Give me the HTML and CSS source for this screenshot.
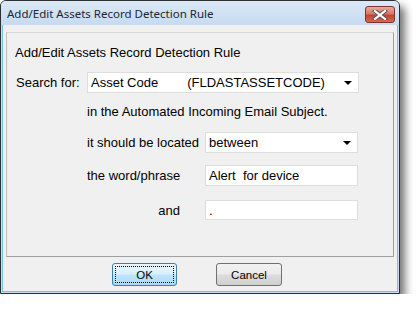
FILE: index.html
```html
<!DOCTYPE html>
<html lang="en">

<head>
    <meta charset="UTF-8">
    <title>Add/Edit Assets Record Detection Rule</title>
    <link rel="stylesheet" href="styles.css">
</head>

<body>

    <div class="window">
        <div class="title-bar">
            <span class="title">Add/Edit Assets Record Detection Rule</span>
            <div class="close-btn">
                <svg width="16" height="10" viewBox="0 0 16 10">
                    <path d="M3 1 L13 9 M13 1 L3 9" stroke="#5a5a5a" stroke-width="4.2" stroke-linecap="square"/>
                    <path d="M3 1 L13 9 M13 1 L3 9" stroke="#ffffff" stroke-width="2.2" stroke-linecap="square"/>
                </svg>
            </div>
        </div>

        <div class="client">
            <div class="group-box">
                <div class="heading">Add/Edit Assets Record Detection Rule</div>

                <div class="search-row">
                    <span class="search-label">Search for:</span>
                    <div class="combo wide">
                        <span class="combo-text">Asset Code</span>
                        <span class="combo-text field-name">(FLDASTASSETCODE)</span>
                        <span class="arrow"></span>
                    </div>
                </div>

                <div class="hint">in the Automated Incoming Email Subject.</div>

                <div class="field-row located">
                    <span class="field-label">it should be located</span>
                    <div class="combo">
                        <span class="combo-text">between</span>
                        <span class="arrow"></span>
                    </div>
                </div>

                <div class="field-row phrase">
                    <span class="field-label">the word/phrase</span>
                    <div class="textbox">Alert  for device</div>
                </div>

                <div class="field-row and-row">
                    <span class="field-label and-label">and</span>
                    <div class="textbox short">.</div>
                </div>
            </div>

            <div class="buttons">
                <button class="btn default"><span class="focus">OK</span></button>
                <button class="btn">Cancel</button>
            </div>
        </div>
    </div>

</body>

</html>
```

FILE: styles.css
```css
* {
    box-sizing: border-box;
}

body {
    margin: 0;
    padding: 0;
    background-color: white;
    font-family: 'Liberation Sans', Arial, sans-serif;
    font-size: 13px;
    color: #000;
}

.window {
    width: 400px;
    height: 294px;
    border: 1px solid #2f2f2f;
    border-radius: 6px 6px 0 0;
    background-color: #c9dcf1;
    box-shadow: 5px 6px 8px rgba(0, 0, 0, 0.55);
    display: flex;
    flex-direction: column;
}

.title-bar {
    height: 24px;
    flex-shrink: 0;
    display: flex;
    align-items: center;
    justify-content: space-between;
    padding: 0 4px 0 6px;
    border-radius: 5px 5px 0 0;
    background: linear-gradient(#dce9f7, #c6daf0);
}

.title {
    font-family: 'Noto Sans', 'Liberation Sans', sans-serif;
    font-size: 11.5px;
    color: #1b2636;
    margin-top: 1px;
}

.close-btn {
    width: 30px;
    height: 17px;
    margin-top: 3px;
    border: 1px solid #7a3530;
    border-radius: 3px;
    background: linear-gradient(#e9a99c 0%, #d47a6a 45%, #c0452f 55%, #d6694f 100%);
    display: flex;
    align-items: center;
    justify-content: center;
}

.client {
    flex-grow: 1;
    margin: 0 1px 1px;
    border: 1px solid #6fc4ee;
    border-top: none;
    background-color: #f0f0f0;
    display: flex;
    flex-direction: column;
}

.group-box {
    margin: 7px 0 0 3px;
    width: 388px;
    height: 225px;
    border: 1px solid #a0a0a0;
    border-top-color: #d8d8d8;
    border-left-color: #bdbdbd;
    padding: 12px 0 0 8px;
}

.heading {
    line-height: 15px;
}

.search-row {
    display: flex;
    align-items: center;
    margin-top: 12px;
}

.search-label {
    width: 72px;
    padding-left: 1px;
}

.combo,
.textbox {
    height: 21px;
    border: 1px solid #dedede;
    background-color: white;
    display: flex;
    align-items: center;
    padding-left: 3px;
    position: relative;
}

.combo {
    width: 153px;
}

.combo.wide {
    width: 272px;
}

.combo-text {
    line-height: 15px;
}

.field-name {
    margin-left: 29px;
}

.arrow {
    position: absolute;
    right: 6px;
    top: 8px;
    border-left: 4px solid transparent;
    border-right: 4px solid transparent;
    border-top: 4px solid #000;
}

.textbox {
    width: 153px;
    white-space: pre;
}

.textbox.short {
    height: 20px;
}

.hint {
    margin: 11px 0 0 72px;
    line-height: 15px;
}

.field-row {
    display: flex;
    align-items: center;
    margin-left: 72px;
}

.field-label {
    width: 118px;
}

.and-label {
    text-align: right;
    padding-right: 25px;
}

.located {
    margin-top: 13px;
}

.phrase {
    margin-top: 12px;
}

.and-row {
    margin-top: 14px;
}

.buttons {
    display: flex;
    justify-content: center;
    gap: 39px;
    margin-top: 6px;
    padding-right: 6px;
}

.btn {
    width: 66px;
    height: 23px;
    border: 1px solid #707070;
    border-radius: 3px;
    background: linear-gradient(#f2f2f2 0%, #ebebeb 48%, #dddddd 52%, #cfcfcf 100%);
    font-family: 'Liberation Sans', Arial, sans-serif;
    font-size: 11.5px;
    color: #000;
    padding: 0;
    display: flex;
    align-items: center;
    justify-content: center;
}

.btn.default {
    width: 65px;
    border-color: #3c7fb1;
    background: linear-gradient(#eaf6fd 0%, #d9f0fc 48%, #bee6fd 52%, #a7d9f5 100%);
    padding: 2px;
}

.focus {
    flex-grow: 1;
    align-self: stretch;
    display: flex;
    align-items: center;
    justify-content: center;
    border: 1px dotted #000;
}
```
